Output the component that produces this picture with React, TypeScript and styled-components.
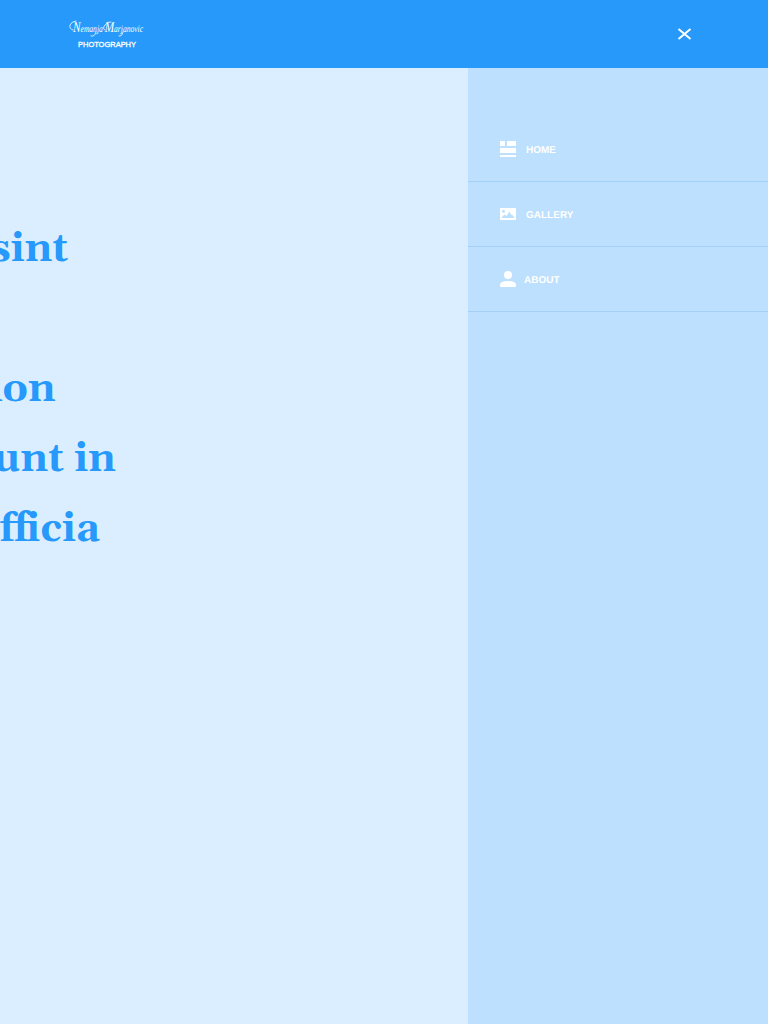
import React from "react";
import styled, { createGlobalStyle } from "styled-components";

const GlobalStyle = createGlobalStyle`
  * { box-sizing: border-box; }
  body { margin: 0; background: #daeeff; overflow: hidden; }
`;

const Page = styled.div`
  display: flex;
  flex-direction: column;
  height: 100vh;
  overflow: hidden;
  font-family: "Liberation Sans", Arial, sans-serif;
`;

const Header = styled.header`
  display: flex;
  flex: none;
  align-items: center;
  justify-content: space-between;
  height: 68px;
  padding: 0 76px 0 68px;
  background: #2699fb;
`;

const Logo = styled.svg`
  display: block;
  width: 78px;
  height: 34px;
  fill: #fff;
`;

const Signature = styled.text`
  font: italic 10px "Liberation Serif", cursive;
  text-rendering: geometricPrecision;
`;

const Tagline = styled.text`
  font: 7.4px "Liberation Sans", Arial, sans-serif;
  stroke: #fff;
  stroke-width: 0.3px;
`;

const Flourish = styled.path`
  fill: none;
  stroke: #fff;
  stroke-width: 0.8px;
  stroke-linecap: round;
`;

const CloseButton = styled.button`
  display: flex;
  padding: 0;
  border: 0;
  background: none;
  color: #fff;
`;

const Body = styled.div`
  display: flex;
  flex: 1;
  min-height: 0;
`;

const Main = styled.main`
  flex: 1;
  min-width: 0;
  overflow: hidden;
  padding-top: 147px;
  background: #daeeff;
`;

const Heading = styled.h1`
  margin: 0 0 0 -230px;
  color: #2699fb;
  font: bold 40px/70px Gelasio, Georgia, serif;
  white-space: nowrap;
`;

const Line = styled.span<{ $indent: number }>`
  display: block;
  padding-left: ${(p) => p.$indent}px;
`;

const Sidebar = styled.nav`
  flex: none;
  width: 300px;
  padding-top: 49px;
  background: #bce0fd;
`;

const Item = styled.a<{ $gap: number }>`
  display: flex;
  align-items: center;
  gap: ${(p) => p.$gap}px;
  height: 65px;
  padding-left: 32px;
  border-bottom: 1px solid #a2d0f6;
  color: #fff;
  font-size: 10px;
  font-weight: bold;
  line-height: 12px;
  text-rendering: geometricPrecision;
`;

const Icon = styled.svg`
  display: block;
  width: 16px;
  height: 16px;
  fill: currentColor;
`;

const Label = styled.span`
  padding-top: 3px;
`;

const lines = [
  { text: "Excepteur sint", indent: 0.5 },
  { text: "occaecat", indent: 0 },
  { text: "cupidatat non", indent: 0 },
  { text: "proident, sunt in", indent: 0 },
  { text: "culpa qui officia", indent: 4 },
];

const items = [
  { label: "HOME", gap: 10, d: "M0 0h5v5H0zM7 0h9v5H7zM0 7h16v5H0zM0 14h16v2H0z" },
  {
    label: "GALLERY",
    gap: 10,
    d: "M.5 2h15q.5 0 .5.5v11q0 .5-.5.5H.5q-.5 0-.5-.5V2.500q0-.5.5-.5zM3.500 3.700a1.500 1.500 0 1 0 0 3a1.500 1.500 0 0 0 0-3zM2 12h12v-1l-2-2.500-.8.5L9.500 5.500 6.500 10 4.500 8.500 2 11z",
  },
  { label: "ABOUT", gap: 8, d: "M8 0a4 4 0 1 1 0 8a4 4 0 0 1 0-8zM0 16v-2q0-4 8-4t8 4v2z" },
];

export default function App() {
  return (
    <Page>
      <GlobalStyle />
      <Header>
        <Logo viewBox="0 0 78 34">
          <Flourish d="M5 13Q1 12 2 8Q4 4 8 4M28 15Q27 20 23 19M37 13Q34 12 37 8Q40 4 43 5M55 15Q54 20 51 19" />
          <Signature x="5" y="15" textLength="70" lengthAdjust="spacingAndGlyphs">
            <tspan fontSize="15">N</tspan>emanja <tspan fontSize="15">M</tspan>arjanovic
          </Signature>
          <Tagline x="10" y="30" textLength="58" lengthAdjust="spacingAndGlyphs">
            PHOTOGRAPHY
          </Tagline>
        </Logo>
        <CloseButton aria-label="Close menu">
          <svg width="16" height="16" viewBox="0 0 16 16" fill="none" stroke="currentColor" strokeWidth="2">
            <path d="M2.500 3L14.500 13M14.500 3L2.500 13" />
          </svg>
        </CloseButton>
      </Header>
      <Body>
        <Main>
          <Heading>
            {lines.map((line) => (
              <Line key={line.text} $indent={line.indent}>
                {line.text}
              </Line>
            ))}
          </Heading>
        </Main>
        <Sidebar>
          {items.map((item) => (
            <Item key={item.label} $gap={item.gap}>
              <Icon viewBox="0 0 16 16">
                <path fillRule="evenodd" d={item.d} />
              </Icon>
              <Label>{item.label}</Label>
            </Item>
          ))}
        </Sidebar>
      </Body>
    </Page>
  );
}
